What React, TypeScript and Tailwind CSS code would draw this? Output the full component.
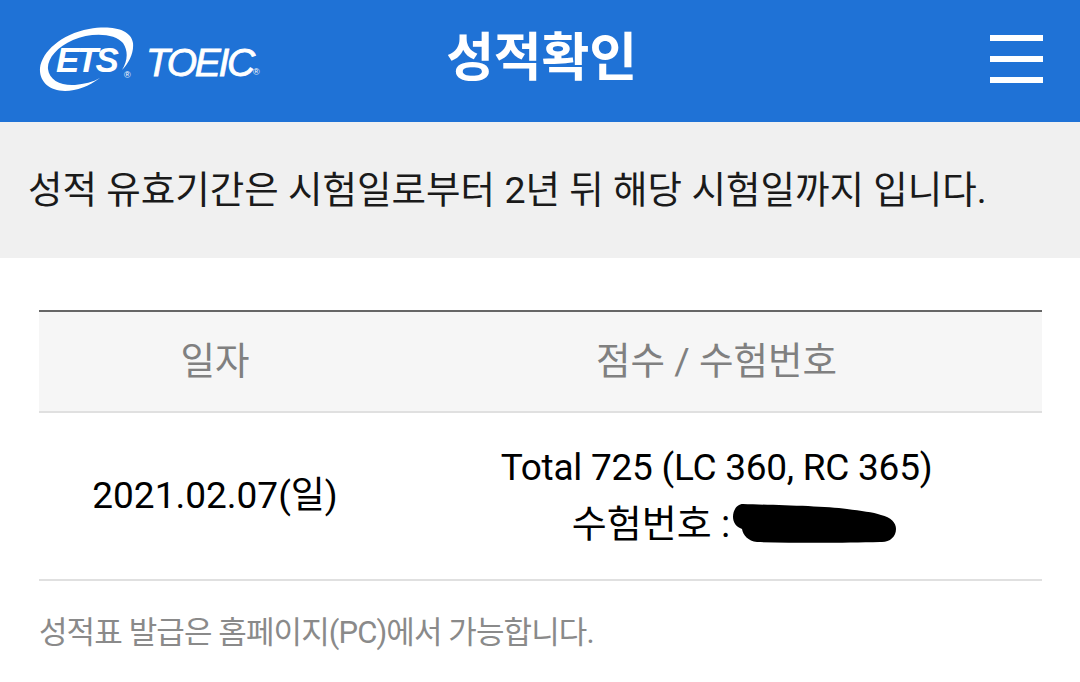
const FONT = "font-['Roboto','Noto_Sans_CJK_KR',sans-serif]";
const LOGO_FONT = "font-['Liberation_Sans',sans-serif]";

function Logo() {
  return (
    <div className="relative h-[68px] w-[222px]">
      <svg className="absolute inset-0" width="96" height="68" viewBox="0 0 96 68">
        <path
          d="M1 42 C3 26 22 8 50 3 C72 -1 92 3 94 17 C95 27 90 37 83 44 C88 36 90 26 84 17 C76 7 52 6 34 14 C18 21 8 33 9 43 C10 54 22 60 36 59 C45 58 54 56 61 52 C50 60 38 65 26 65 C10 65 0 55 1 42 Z"
          fill="#ffffff"
        />
      </svg>
      <span className={`absolute left-[17px] top-[14px] text-[35px] leading-[40px] font-bold italic tracking-[-2.6px] text-white ${LOGO_FONT}`}>
        ETS
      </span>
      <span className={`absolute left-[85px] top-[44px] text-[9px] leading-[10px] text-white ${LOGO_FONT}`}>®</span>
      <span className={`absolute left-[107px] top-[15px] text-[39px] leading-[44px] italic tracking-[-2.3px] text-white [-webkit-text-stroke:0.8px_white] ${LOGO_FONT}`}>
        TOEIC
      </span>
      <span className={`absolute left-[214px] top-[41px] text-[9px] leading-[10px] text-white ${LOGO_FONT}`}>®</span>
    </div>
  );
}

export default function App() {
  return (
    <div className={`flex h-[682px] w-[1080px] flex-col overflow-hidden bg-white ${FONT}`}>
      {/* Header */}
      <header className="relative flex h-[122px] items-center justify-center bg-[#1f72d6]">
        <div className="absolute left-[39px] top-[26px]">
          <Logo />
        </div>
        <h1 className="mb-[4px] ml-[3px] text-[52px] leading-none font-bold tracking-[-0.2px] text-white">성적확인</h1>
        <div className="absolute right-[37px] top-[35px] flex w-[53px] flex-col gap-[15px]">
          <span className="h-[6px] bg-white" />
          <span className="h-[6px] bg-white" />
          <span className="h-[6px] bg-white" />
        </div>
      </header>

      {/* Notice */}
      <div className="flex h-[136px] items-center bg-[#f0f0f0] pl-[28px] text-[37.5px] text-[#1a1a1a]">
        성적 유효기간은 시험일로부터 2년 뒤 해당 시험일까지 입니다.
      </div>

      {/* Score table */}
      <div className="px-[39px] pt-[52px] pr-[38px]">
        <div className="border-t-2 border-[#666666]">
          <div className="flex h-[101px] items-center border-b-2 border-[#e0e0e0] bg-[#f6f6f6] text-[37.5px] text-[#808080]">
            <div className="w-[352px] text-center">일자</div>
            <div className="flex-1 text-center">점수 / 수험번호</div>
          </div>
          <div className="flex h-[168px] items-center border-b-2 border-[#e0e0e0] text-[37px] text-black">
            <div className="w-[352px] text-center">2021.02.07(일)</div>
            <div className="flex-1 text-center leading-[56px]">
              <div className="tracking-[-0.25px]">Total 725 (LC 360, RC 365)</div>
              <div className="flex items-center justify-center pl-[36px] text-[38px]">
                <span>수험번호 :</span>
                <svg className="ml-[3px]" width="164" height="40" viewBox="0 0 164 40">
                  <path
                    d="M10 0 C40 1 90 2 114 5 C128 7 140 8 148 11 C158 13 163 19 163 25 C163 33 156 39 147 38 C110 39 60 39 24 38 C15 37 10 31 9 25 C3 23 0 18 0 13 C0 6 4 0 10 0 Z"
                    fill="#000000"
                  />
                </svg>
              </div>
            </div>
          </div>
          <p className="mt-[28px] text-[31px] leading-[48px] tracking-[-0.9px] text-[#8a8a8a]">
            성적표 발급은 홈페이지(PC)에서 가능합니다.
          </p>
        </div>
      </div>
    </div>
  );
}
